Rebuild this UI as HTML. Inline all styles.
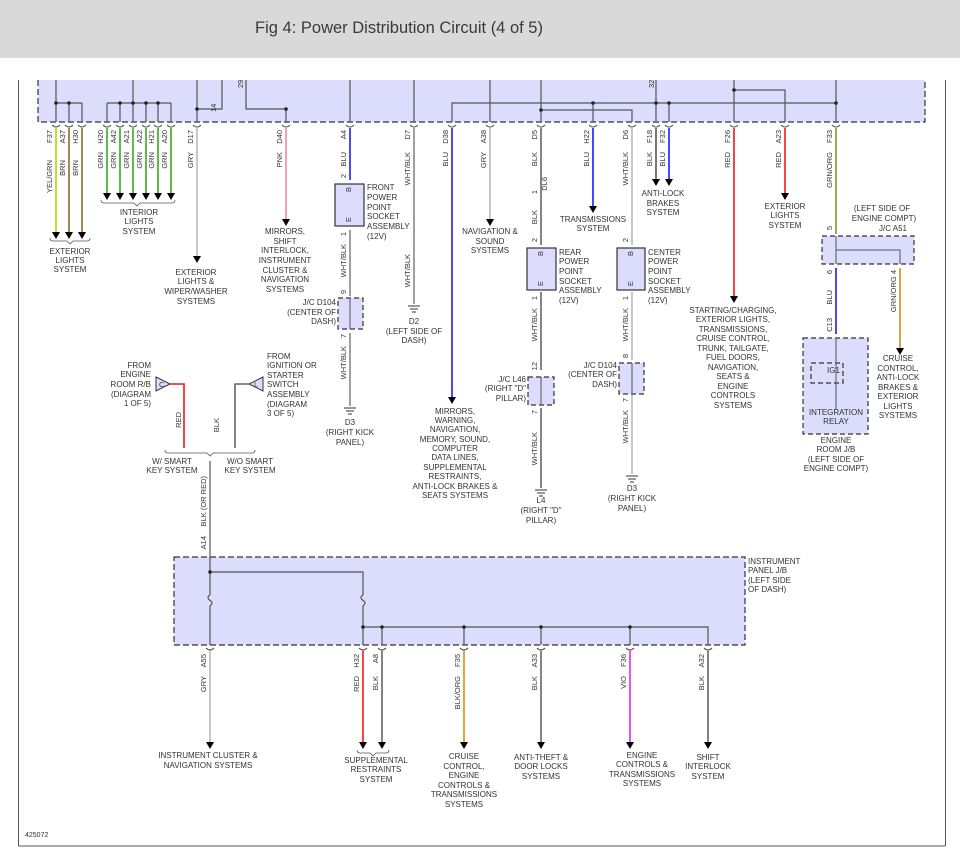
<!DOCTYPE html>
<html><head><meta charset="utf-8"><style>
html,body{margin:0;padding:0;background:#fff;}
svg{display:block;font-family:"Liberation Sans",sans-serif;}
.t{font-size:8px;fill:#333;}
.r{font-size:7.5px;fill:#333;}
</style></head><body>
<svg width="960" height="864" viewBox="0 0 960 864" xmlns="http://www.w3.org/2000/svg">
<rect x="0" y="0" width="960" height="58" fill="#d9d9d9"/>
<text x="399" y="33" font-size="16.5" fill="#3a3a3a" text-anchor="middle">Fig 4: Power Distribution Circuit (4 of 5)</text>
<!-- frame -->
<line x1="18.5" y1="80" x2="18.5" y2="846" stroke="#555" stroke-width="1"/>
<line x1="18.5" y1="846" x2="945" y2="846" stroke="#555"/>
<line x1="945.5" y1="80" x2="945.5" y2="846" stroke="#555"/>
<!-- top box -->
<rect x="38" y="80" width="887" height="42" fill="#dcdcfc"/>
<path d="M38 80V122H925V80" fill="none" stroke="#333" stroke-width="1.2" stroke-dasharray="6,3"/>
<g stroke="#555" stroke-width="1.2" fill="none">
<path d="M56 80V122M69 103V122M82 103V122M56 103H82"/>
<path d="M133 80V122M107 103V122M120 103V122M146 103V122M158 103V122M171 103V122M107 103H171"/>
<path d="M197 80V122M197 109H222V80M246 80V109H286V122"/>
<path d="M350 80V122M414 80V122M452 122V103H836"/>
<path d="M490 80V122M541 80V122M541 110H632V122M593 103V122M656 80V122M669 103V122"/>
<path d="M734 80V122M734 90H785V122M836 80V122"/>
</g>
<g fill="#222"><circle cx="56" cy="103" r="1.8"/><circle cx="69" cy="103" r="1.8"/><circle cx="120" cy="103" r="1.8"/><circle cx="133" cy="103" r="1.8"/><circle cx="146" cy="103" r="1.8"/><circle cx="158" cy="103" r="1.8"/><circle cx="197" cy="109" r="1.8"/><circle cx="286" cy="109" r="1.8"/><circle cx="541" cy="110" r="1.8"/><circle cx="593" cy="103" r="1.8"/><circle cx="656" cy="103" r="1.8"/><circle cx="669" cy="103" r="1.8"/><circle cx="734" cy="90" r="1.8"/><circle cx="836" cy="103" r="1.8"/></g>
<text class="r" transform="rotate(-90 216 112)" x="216" y="112">14</text>
<text class="r" transform="rotate(-90 243 88)" x="243" y="88">29</text>
<text class="r" transform="rotate(-90 654 88)" x="654" y="88">32</text>
<g stroke="#555" fill="none" stroke-width="1">
<path d="M52 125q4 4 8 0M65 125q4 4 8 0M78 125q4 4 8 0M103 125q4 4 8 0M116 125q4 4 8 0M129 125q4 4 8 0M142 125q4 4 8 0M154 125q4 4 8 0M167 125q4 4 8 0M193 125q4 4 8 0M282 125q4 4 8 0M346 125q4 4 8 0M410 125q4 4 8 0M448 125q4 4 8 0M486 125q4 4 8 0M537 125q4 4 8 0M589 125q4 4 8 0M628 125q4 4 8 0M652 125q4 4 8 0M665 125q4 4 8 0M730 125q4 4 8 0M781 125q4 4 8 0M832 125q4 4 8 0"/>
</g>
<g fill="none" stroke-width="1.6">
<path d="M56 128V232" stroke="#b8d400"/>
<path d="M69 128V232M82 128V232" stroke="#8a6a2a"/>
<path d="M107 128V194M120 128V194M133 128V194M146 128V194M158 128V194M171 128V194" stroke="#3aa81a"/>
<path d="M197 128V258" stroke="#bbb"/>
<path d="M286 128V220" stroke="#f08aa0"/>
<path d="M350 128V180" stroke="#1a1aff"/>
<path d="M350 230V296M350 333V406M414 128V304" stroke="#888"/>
<path d="M452 128V398" stroke="#1a1aff"/>
<path d="M490 128V220" stroke="#bbb"/>
<path d="M541 128V245M541 292V370M541 408V488" stroke="#666"/>
<path d="M593 128V208" stroke="#1a1aff"/>
<path d="M632 128V245M632 292V360M632 395V474" stroke="#bbb"/>
<path d="M656 128V180" stroke="#555"/>
<path d="M669 128V180" stroke="#1a1aff"/>
<path d="M734 128V296" stroke="#f01818"/>
<path d="M785 128V194" stroke="#f01818"/>
<path d="M836 128V234" stroke="#7a9a20"/>
<path d="M836 268V334" stroke="#1a1aff"/>
<path d="M900 268V348" stroke="#e08a10"/>
</g>
<g fill="#000">
<path d="M52 232h8l-4 7zM65 232h8l-4 7zM78 232h8l-4 7z"/>
<path d="M103 193h8l-4 7zM116 193h8l-4 7zM129 193h8l-4 7zM142 193h8l-4 7zM154 193h8l-4 7zM167 193h8l-4 7z"/>
<path d="M193 256h8l-4 7zM282 219h8l-4 7zM448 397h8l-4 7zM486 219h8l-4 7zM589 206h8l-4 7zM652 179h8l-4 7zM665 179h8l-4 7zM730 296h8l-4 7zM781 193h8l-4 7zM896 348h8l-4 7z"/>
</g>
<g stroke="#555" fill="none" stroke-width="0.8">
<path d="M50 238q0 3 3 3h14l3 3l3-3h14q3 0 3-3"/>
<path d="M101 200q0 3 3 3h30l3 3l3-3h32q3 0 3-3"/>
</g>
<g stroke="#333" stroke-width="1.2" fill="#dcdcfc">
<rect x="335" y="184" width="29" height="42"/>
<rect x="527" y="248" width="29" height="42"/>
<rect x="617" y="248" width="28" height="42"/>
</g>
<g stroke="#333" stroke-width="1.2" fill="#dcdcfc" stroke-dasharray="5,3">
<rect x="338" y="298" width="25" height="31"/>
<rect x="528" y="377" width="26" height="28"/>
<rect x="619" y="363" width="25" height="31"/>
<rect x="822" y="236" width="92" height="28"/>
<rect x="803" y="338" width="65" height="96"/>
<rect x="811" y="363" width="32" height="20"/>
</g>
<g stroke="#555" fill="none" stroke-width="1">
<path d="M350 298V329M541 377V405M632 363V394M836 236V264M836 250H900V264M836 338V410"/>
</g>
<g class="r">
<text x="346" y="193" transform="rotate(-90 348 190)">B</text>
<text x="346" y="223" transform="rotate(-90 348 220)">E</text>
<text x="538" y="257" transform="rotate(-90 540 254)">B</text>
<text x="538" y="287" transform="rotate(-90 540 284)">E</text>
<text x="628" y="257" transform="rotate(-90 630 254)">B</text>
<text x="628" y="287" transform="rotate(-90 630 284)">E</text>
</g>
<text class="t" x="827" y="373">IG1</text>
<g stroke="#333" stroke-width="1">
<path d="M344 408h12M346 411h8M348 414h4M408 306h12M410 309h8M412 312h4M535 490h12M537 493h8M539 496h4M626 476h12M628 479h8M630 482h4"/>
</g>
<g class="r" text-anchor="end">
<text transform="rotate(-90 52 130)" x="52" y="130">F37</text>
<text transform="rotate(-90 52 160)" x="52" y="160">YEL/GRN</text>
<text transform="rotate(-90 65 130)" x="65" y="130">A37</text>
<text transform="rotate(-90 65 160)" x="65" y="160">BRN</text>
<text transform="rotate(-90 78 130)" x="78" y="130">H30</text>
<text transform="rotate(-90 78 160)" x="78" y="160">BRN</text>
<text transform="rotate(-90 103 130)" x="103" y="130">H20</text>
<text transform="rotate(-90 116 130)" x="116" y="130">A42</text>
<text transform="rotate(-90 129 130)" x="129" y="130">A21</text>
<text transform="rotate(-90 142 130)" x="142" y="130">A22</text>
<text transform="rotate(-90 154 130)" x="154" y="130">H21</text>
<text transform="rotate(-90 167 130)" x="167" y="130">A20</text>
<text transform="rotate(-90 103 152)" x="103" y="152">GRN</text>
<text transform="rotate(-90 116 152)" x="116" y="152">GRN</text>
<text transform="rotate(-90 129 152)" x="129" y="152">GRN</text>
<text transform="rotate(-90 142 152)" x="142" y="152">GRN</text>
<text transform="rotate(-90 154 152)" x="154" y="152">GRN</text>
<text transform="rotate(-90 167 152)" x="167" y="152">GRN</text>
<text transform="rotate(-90 193 130)" x="193" y="130">D17</text>
<text transform="rotate(-90 193 152)" x="193" y="152">GRY</text>
<text transform="rotate(-90 282 130)" x="282" y="130">D40</text>
<text transform="rotate(-90 282 152)" x="282" y="152">PNK</text>
<text transform="rotate(-90 346 130)" x="346" y="130">A4</text>
<text transform="rotate(-90 346 152)" x="346" y="152">BLU</text>
<text transform="rotate(-90 346 174)" x="346" y="174">2</text>
<text transform="rotate(-90 346 232)" x="346" y="232">1</text>
<text transform="rotate(-90 346 244)" x="346" y="244">WHT/BLK</text>
<text transform="rotate(-90 346 290)" x="346" y="290">9</text>
<text transform="rotate(-90 346 334)" x="346" y="334">7</text>
<text transform="rotate(-90 346 346)" x="346" y="346">WHT/BLK</text>
<text transform="rotate(-90 410 130)" x="410" y="130">D7</text>
<text transform="rotate(-90 410 152)" x="410" y="152">WHT/BLK</text>
<text transform="rotate(-90 410 254)" x="410" y="254">WHT/BLK</text>
<text transform="rotate(-90 448 130)" x="448" y="130">D38</text>
<text transform="rotate(-90 448 152)" x="448" y="152">BLU</text>
<text transform="rotate(-90 486 130)" x="486" y="130">A38</text>
<text transform="rotate(-90 486 152)" x="486" y="152">GRY</text>
<text transform="rotate(-90 537 130)" x="537" y="130">D5</text>
<text transform="rotate(-90 537 152)" x="537" y="152">BLK</text>
<text transform="rotate(-90 537 190)" x="537" y="190">1</text>
<text transform="rotate(-90 547 177)" x="547" y="177">DL6</text>
<text transform="rotate(-90 537 210)" x="537" y="210">BLK</text>
<text transform="rotate(-90 537 238)" x="537" y="238">2</text>
<text transform="rotate(-90 537 296)" x="537" y="296">1</text>
<text transform="rotate(-90 537 308)" x="537" y="308">WHT/BLK</text>
<text transform="rotate(-90 537 362)" x="537" y="362">12</text>
<text transform="rotate(-90 537 410)" x="537" y="410">7</text>
<text transform="rotate(-90 537 432)" x="537" y="432">WHT/BLK</text>
<text transform="rotate(-90 589 130)" x="589" y="130">H22</text>
<text transform="rotate(-90 589 152)" x="589" y="152">BLU</text>
<text transform="rotate(-90 628 130)" x="628" y="130">D6</text>
<text transform="rotate(-90 628 152)" x="628" y="152">WHT/BLK</text>
<text transform="rotate(-90 628 238)" x="628" y="238">2</text>
<text transform="rotate(-90 628 296)" x="628" y="296">1</text>
<text transform="rotate(-90 628 308)" x="628" y="308">WHT/BLK</text>
<text transform="rotate(-90 628 354)" x="628" y="354">8</text>
<text transform="rotate(-90 628 398)" x="628" y="398">7</text>
<text transform="rotate(-90 628 410)" x="628" y="410">WHT/BLK</text>
<text transform="rotate(-90 652 130)" x="652" y="130">F18</text>
<text transform="rotate(-90 652 152)" x="652" y="152">BLK</text>
<text transform="rotate(-90 665 130)" x="665" y="130">F32</text>
<text transform="rotate(-90 665 152)" x="665" y="152">BLU</text>
<text transform="rotate(-90 730 130)" x="730" y="130">F26</text>
<text transform="rotate(-90 730 152)" x="730" y="152">RED</text>
<text transform="rotate(-90 781 130)" x="781" y="130">A23</text>
<text transform="rotate(-90 781 152)" x="781" y="152">RED</text>
<text transform="rotate(-90 832 130)" x="832" y="130">F33</text>
<text transform="rotate(-90 832 152)" x="832" y="152">GRN/ORG</text>
<text transform="rotate(-90 832 226)" x="832" y="226">5</text>
<text transform="rotate(-90 832 270)" x="832" y="270">6</text>
<text transform="rotate(-90 832 290)" x="832" y="290">BLU</text>
<text transform="rotate(-90 832 318)" x="832" y="318">C13</text>
<text transform="rotate(-90 896 270)" x="896" y="270">GRN/ORG 4</text>
<text transform="rotate(-90 181 412)" x="181" y="412">RED</text>
<text transform="rotate(-90 219 418)" x="219" y="418">BLK</text>
<text transform="rotate(-90 206 476)" x="206" y="476">BLK (OR RED)</text>
<text transform="rotate(-90 206 536)" x="206" y="536">A14</text>
</g>
<g class="t" text-anchor="middle">
<text x="70" y="254">EXTERIOR</text><text x="70" y="263">LIGHTS</text><text x="70" y="272">SYSTEM</text>
<text x="139" y="215">INTERIOR</text><text x="139" y="224">LIGHTS</text><text x="139" y="234">SYSTEM</text>
<text x="196" y="275">EXTERIOR</text><text x="196" y="284">LIGHTS &amp;</text><text x="196" y="294">WIPER/WASHER</text><text x="196" y="304">SYSTEMS</text>
<text x="285" y="234">MIRRORS,</text><text x="285" y="244">SHIFT</text><text x="285" y="253">INTERLOCK,</text><text x="285" y="263">INSTRUMENT</text><text x="285" y="273">CLUSTER &amp;</text><text x="285" y="282">NAVIGATION</text><text x="285" y="292">SYSTEMS</text>
<text x="350" y="425">D3</text><text x="350" y="435">(RIGHT KICK</text><text x="350" y="445">PANEL)</text>
<text x="414" y="324">D2</text><text x="414" y="334">(LEFT SIDE OF</text><text x="414" y="343">DASH)</text>
<text x="455" y="414">MIRRORS,</text><text x="455" y="423">WARNING,</text><text x="455" y="432">NAVIGATION,</text><text x="455" y="442">MEMORY, SOUND,</text><text x="455" y="451">COMPUTER</text><text x="455" y="460">DATA LINES,</text><text x="455" y="470">SUPPLEMENTAL</text><text x="455" y="479">RESTRAINTS,</text><text x="455" y="489">ANTI-LOCK BRAKES &amp;</text><text x="455" y="498">SEATS SYSTEMS</text>
<text x="490" y="234">NAVIGATION &amp;</text><text x="490" y="244">SOUND</text><text x="490" y="253">SYSTEMS</text>
<text x="541" y="503">L4</text><text x="541" y="513">(RIGHT "D"</text><text x="541" y="523">PILLAR)</text>
<text x="593" y="222">TRANSMISSIONS</text><text x="593" y="231">SYSTEM</text>
<text x="632" y="491">D3</text><text x="632" y="501">(RIGHT KICK</text><text x="632" y="511">PANEL)</text>
<text x="663" y="196">ANTI-LOCK</text><text x="663" y="206">BRAKES</text><text x="663" y="215">SYSTEM</text>
<text x="733" y="313">STARTING/CHARGING,</text><text x="733" y="322">EXTERIOR LIGHTS,</text><text x="733" y="332">TRANSMISSIONS,</text><text x="733" y="341">CRUISE CONTROL,</text><text x="733" y="351">TRUNK, TAILGATE,</text><text x="733" y="360">FUEL DOORS,</text><text x="733" y="370">NAVIGATION,</text><text x="733" y="379">SEATS &amp;</text><text x="733" y="389">ENGINE</text><text x="733" y="398">CONTROLS</text><text x="733" y="408">SYSTEMS</text>
<text x="785" y="209">EXTERIOR</text><text x="785" y="218">LIGHTS</text><text x="785" y="228">SYSTEM</text>
<text x="836" y="415">INTEGRATION</text><text x="836" y="424">RELAY</text>
<text x="836" y="443">ENGINE</text><text x="836" y="452">ROOM J/B</text><text x="836" y="462">(LEFT SIDE OF</text><text x="836" y="471">ENGINE COMPT)</text>
<text x="898" y="361">CRUISE</text><text x="898" y="371">CONTROL,</text><text x="898" y="380">ANTI-LOCK</text><text x="898" y="390">BRAKES &amp;</text><text x="898" y="399">EXTERIOR</text><text x="898" y="409">LIGHTS</text><text x="898" y="418">SYSTEMS</text>
<text x="882" y="211">(LEFT SIDE OF</text><text x="884" y="221">ENGINE COMPT)</text><text x="893" y="231">J/C A51</text>
<text x="172" y="464">W/ SMART</text><text x="172" y="473">KEY SYSTEM</text>
<text x="250" y="464">W/O SMART</text><text x="250" y="473">KEY SYSTEM</text>
</g>
<g class="t">
<text x="367" y="190">FRONT</text><text x="367" y="200">POWER</text><text x="367" y="210">POINT</text><text x="367" y="219">SOCKET</text><text x="367" y="229">ASSEMBLY</text><text x="367" y="239">(12V)</text>
<text x="559" y="255">REAR</text><text x="559" y="264">POWER</text><text x="559" y="274">POINT</text><text x="559" y="284">SOCKET</text><text x="559" y="293">ASSEMBLY</text><text x="559" y="303">(12V)</text>
<text x="648" y="255">CENTER</text><text x="648" y="264">POWER</text><text x="648" y="274">POINT</text><text x="648" y="284">SOCKET</text><text x="648" y="293">ASSEMBLY</text><text x="648" y="303">(12V)</text>
<text x="267" y="359">FROM</text><text x="267" y="368">IGNITION OR</text><text x="267" y="378">STARTER</text><text x="267" y="387">SWITCH</text><text x="267" y="397">ASSEMBLY</text><text x="267" y="407">(DIAGRAM</text><text x="267" y="416">3 OF 5)</text>
<text x="748" y="564">INSTRUMENT</text><text x="748" y="573">PANEL J/B</text><text x="748" y="583">(LEFT SIDE</text><text x="748" y="592">OF DASH)</text>
<text x="216" y="602">GAUGE 2</text><text x="216" y="611">FUSE</text><text x="216" y="620">7.5A</text>
<text x="369" y="602">IG2</text><text x="369" y="611">FUSE</text><text x="369" y="620">7.5A</text>
<text x="25" y="837" font-size="7">425072</text>
</g>
<g class="t" text-anchor="end">
<text x="336" y="305">J/C D104</text><text x="336" y="315">(CENTER OF</text><text x="336" y="324">DASH)</text>
<text x="526" y="382">J/C L46</text><text x="526" y="391">(RIGHT "D"</text><text x="526" y="401">PILLAR)</text>
<text x="617" y="368">J/C D104</text><text x="617" y="377">(CENTER OF</text><text x="617" y="387">DASH)</text>
<text x="151" y="368">FROM</text><text x="151" y="377">ENGINE</text><text x="151" y="387">ROOM R/B</text><text x="151" y="397">(DIAGRAM</text><text x="151" y="406">1 OF 5)</text>
</g>
<path d="M156 377l14 7l-14 7z" fill="#dcdcfc" stroke="#333"/>
<text class="r" x="159" y="387">C</text>
<path d="M263 377l-14 7l14 7z" fill="#dcdcfc" stroke="#333"/>
<text class="r" x="254" y="387">L</text>
<path d="M170 384H184V448" fill="none" stroke="#f01818" stroke-width="1.6"/>
<path d="M249 384H235V448" fill="none" stroke="#666" stroke-width="1.6"/>
<path d="M165 450q0 3 3 3h39l3 3l3-3h39q3 0 3-3" fill="none" stroke="#555" stroke-width="0.8"/>
<path d="M210 461V557" stroke="#555" stroke-width="1.2"/>
<rect x="174" y="557" width="571" height="88" fill="#dcdcfc" stroke="#333" stroke-width="1.2" stroke-dasharray="6,3"/>
<g fill="none" stroke="#555" stroke-width="1.2">
<path d="M210 557V595M210 606V645M210 572H363V595M363 606V645M363 627H708V645M382 627V645M464 627V645M541 627V645M630 627V645"/>
<path d="M210 595q-4 2 0 5.5q4 2 0 5.5M363 595q-4 2 0 5.5q4 2 0 5.5"/>
<path d="M206 648q4 4 8 0M359 648q4 4 8 0M378 648q4 4 8 0M460 648q4 4 8 0M537 648q4 4 8 0M626 648q4 4 8 0M704 648q4 4 8 0"/>
</g>
<g fill="#222"><circle cx="210" cy="572" r="1.8"/><circle cx="363" cy="627" r="1.8"/><circle cx="382" cy="627" r="1.8"/><circle cx="464" cy="627" r="1.8"/><circle cx="541" cy="627" r="1.8"/><circle cx="630" cy="627" r="1.8"/></g>
<g fill="none" stroke-width="1.6">
<path d="M210 651V743" stroke="#bbb"/>
<path d="M363 651V743" stroke="#f01818"/>
<path d="M382 651V743M541 651V743M708 651V743" stroke="#666"/>
<path d="M464 651V743" stroke="#e08a10"/>
<path d="M630 651V743" stroke="#ee22ee"/>
</g>
<g fill="#000"><path d="M206 742h8l-4 7zM359 742h8l-4 7zM378 742h8l-4 7zM460 742h8l-4 7zM537 742h8l-4 7zM626 742h8l-4 7zM704 742h8l-4 7z"/></g>
<path d="M357 750q0 3 3 3h10l3 3l3-3h10q3 0 3-3" fill="none" stroke="#555" stroke-width="0.8"/>
<g class="r" text-anchor="end">
<text transform="rotate(-90 206 654)" x="206" y="654">A55</text>
<text transform="rotate(-90 206 676)" x="206" y="676">GRY</text>
<text transform="rotate(-90 359 654)" x="359" y="654">H32</text>
<text transform="rotate(-90 359 676)" x="359" y="676">RED</text>
<text transform="rotate(-90 378 654)" x="378" y="654">A8</text>
<text transform="rotate(-90 378 676)" x="378" y="676">BLK</text>
<text transform="rotate(-90 460 654)" x="460" y="654">F35</text>
<text transform="rotate(-90 460 676)" x="460" y="676">BLK/ORG</text>
<text transform="rotate(-90 537 654)" x="537" y="654">A33</text>
<text transform="rotate(-90 537 676)" x="537" y="676">BLK</text>
<text transform="rotate(-90 626 654)" x="626" y="654">F36</text>
<text transform="rotate(-90 626 676)" x="626" y="676">VIO</text>
<text transform="rotate(-90 704 654)" x="704" y="654">A32</text>
<text transform="rotate(-90 704 676)" x="704" y="676">BLK</text>
</g>
<g class="t" text-anchor="middle">
<text x="208" y="758">INSTRUMENT CLUSTER &amp;</text><text x="208" y="768">NAVIGATION SYSTEMS</text>
<text x="376" y="763">SUPPLEMENTAL</text><text x="376" y="772">RESTRAINTS</text><text x="376" y="782">SYSTEM</text>
<text x="464" y="759">CRUISE</text><text x="464" y="769">CONTROL,</text><text x="464" y="778">ENGINE</text><text x="464" y="788">CONTROLS &amp;</text><text x="464" y="797">TRANSMISSIONS</text><text x="464" y="807">SYSTEMS</text>
<text x="541" y="760">ANTI-THEFT &amp;</text><text x="541" y="769">DOOR LOCKS</text><text x="541" y="779">SYSTEMS</text>
<text x="642" y="758">ENGINE</text><text x="642" y="767">CONTROLS &amp;</text><text x="642" y="777">TRANSMISSIONS</text><text x="642" y="786">SYSTEMS</text>
<text x="708" y="760">SHIFT</text><text x="708" y="769">INTERLOCK</text><text x="708" y="779">SYSTEM</text>
</g>
</svg>
</body></html>
